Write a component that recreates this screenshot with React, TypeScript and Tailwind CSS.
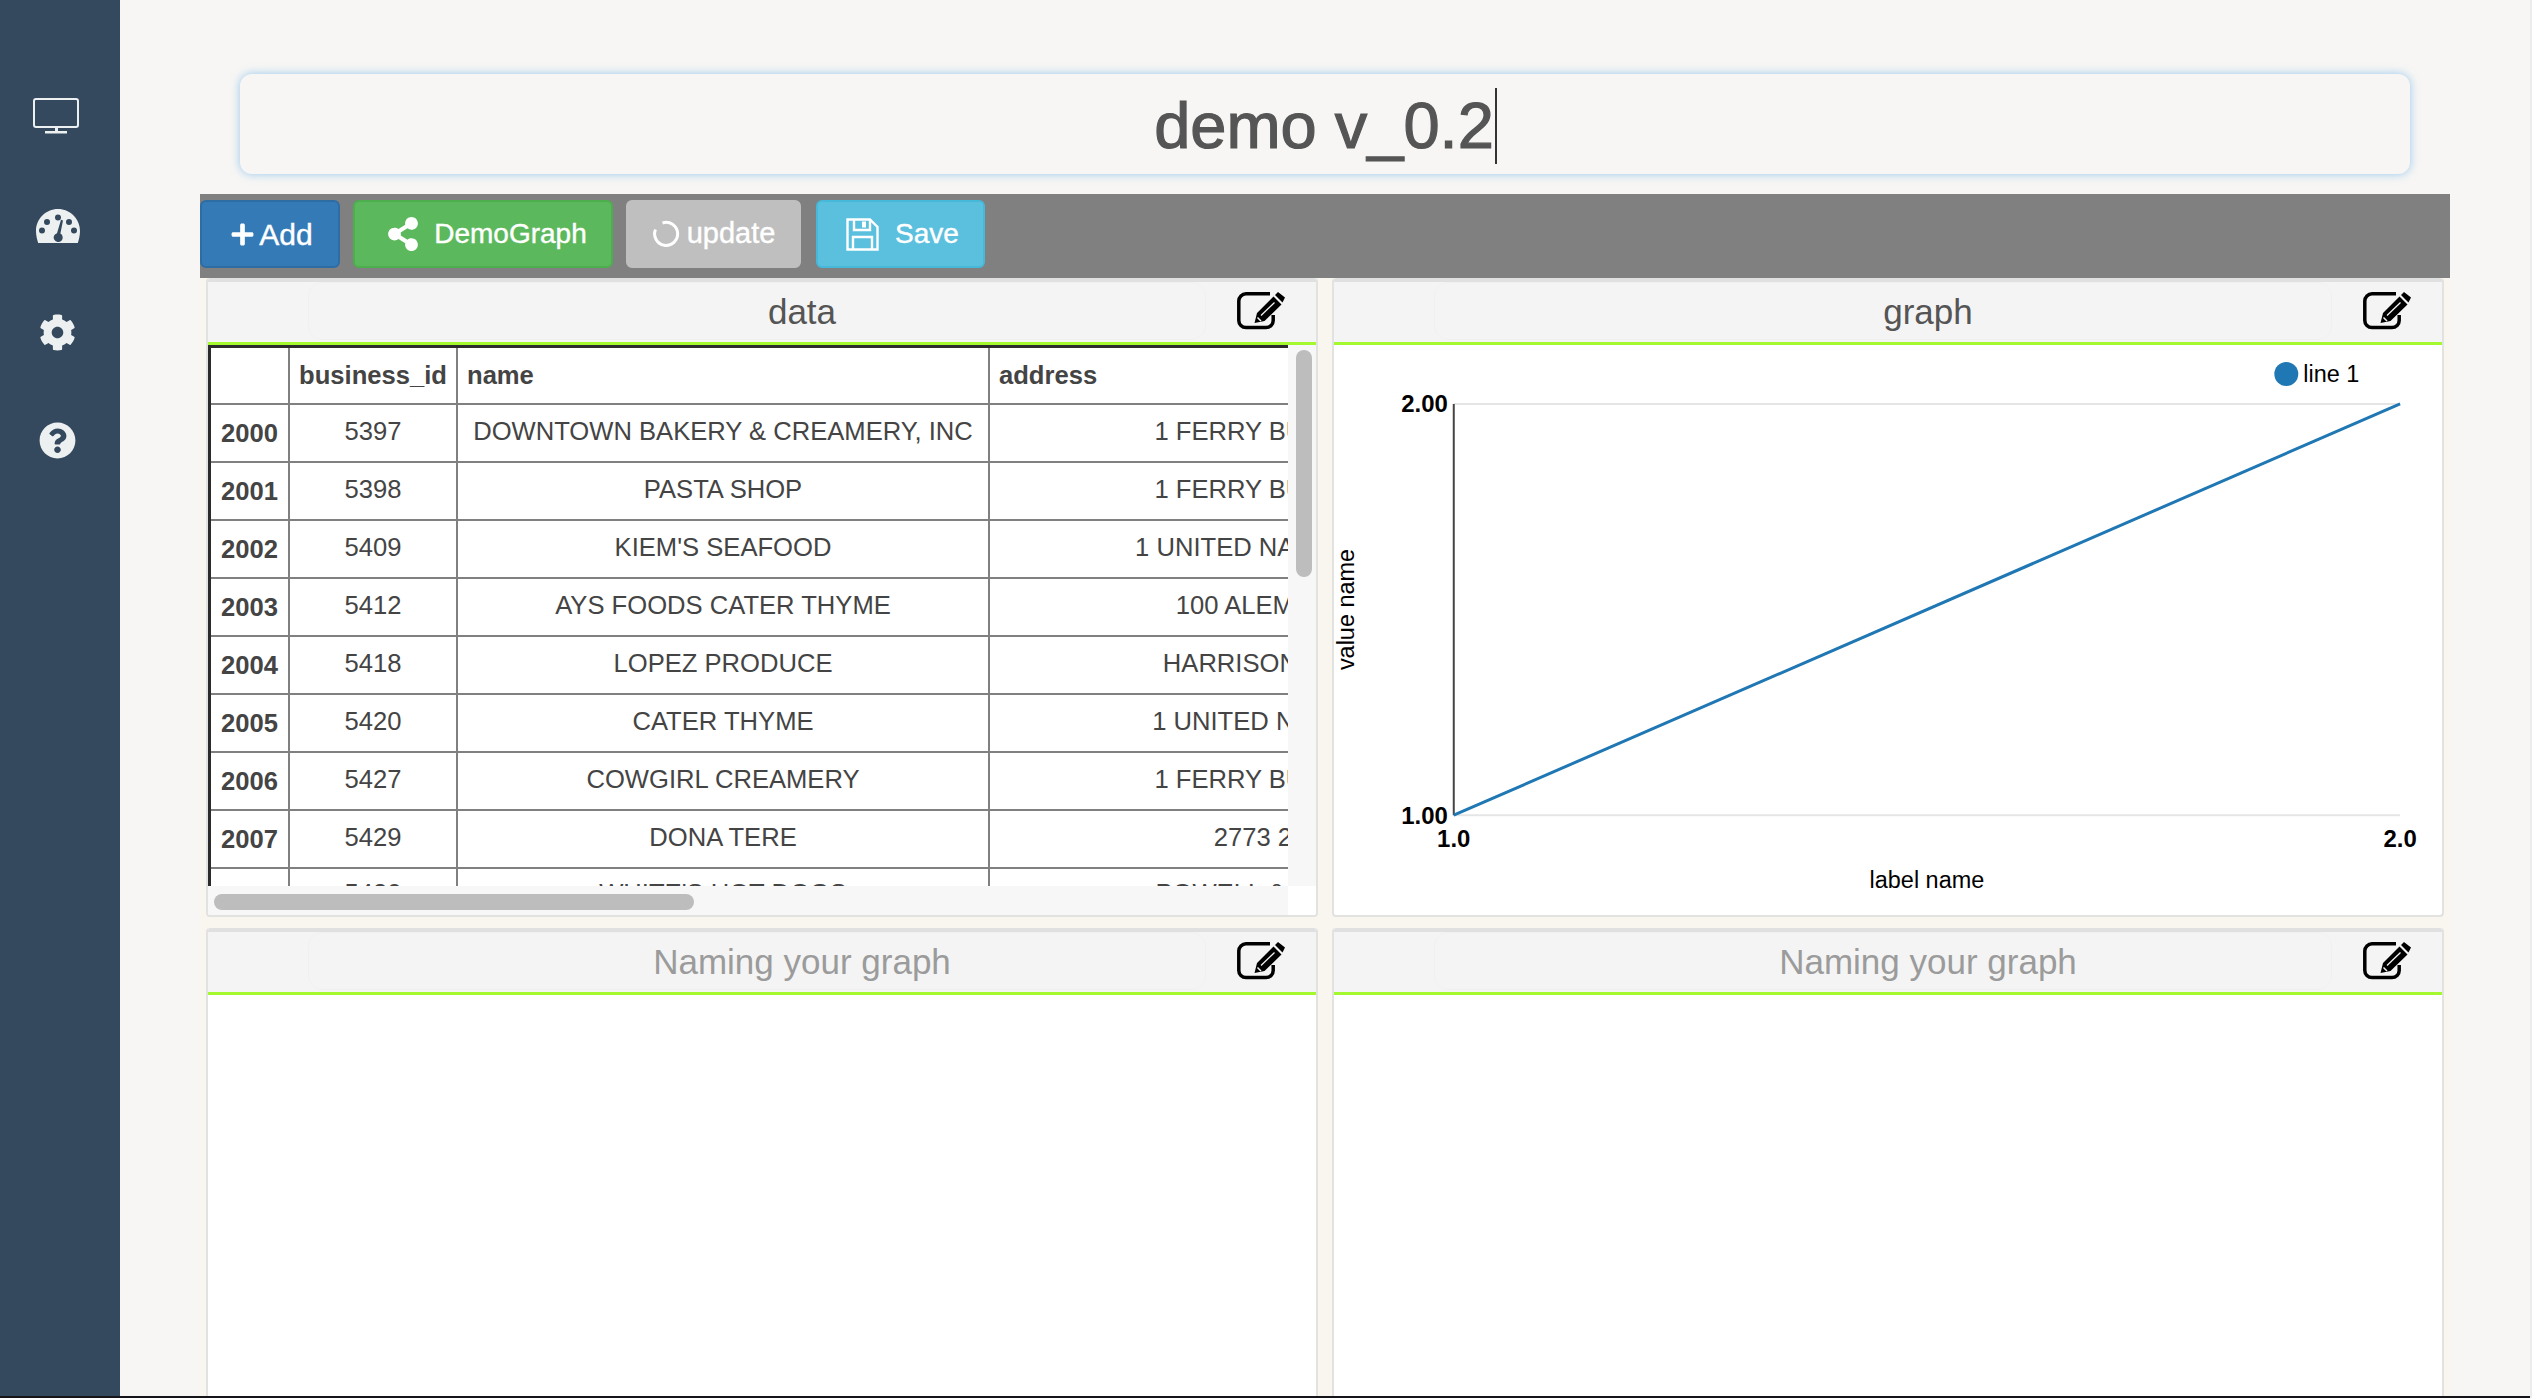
import React from "react";
import { FaCog, FaQuestionCircle, FaShareAlt, FaPlus } from "react-icons/fa";

const rows = [
  ["2000", "5397", "DOWNTOWN BAKERY & CREAMERY, INC", "1 FERRY BUILDING #75"],
  ["2001", "5398", "PASTA SHOP", "1 FERRY BUILDING #75"],
  ["2002", "5409", "KIEM'S SEAFOOD", "1 UNITED NATIONS PLAZA"],
  ["2003", "5412", "AYS FOODS CATER THYME", "100 ALEMANY BLVD"],
  ["2004", "5418", "LOPEZ PRODUCE", "HARRISON ST & 16TH"],
  ["2005", "5420", "CATER THYME", "1 UNITED NATIONS PLZ"],
  ["2006", "5427", "COWGIRL CREAMERY", "1 FERRY BUILDING #19"],
  ["2007", "5429", "DONA TERE", "2773 24TH ST"],
];

function EditIcon() {
  return (
    <svg width="48" height="38" viewBox="0 0 48 38" className="shrink-0">
      <path d="M33 1.800H9a7.200 7.200 0 0 0-7.200 7.200v19.400a7.200 7.200 0 0 0 7.200 7.200h20a7.200 7.200 0 0 0 7.200-7.200v-5.400" fill="none" stroke="#000" strokeWidth="3.500" />
      <path fill="#000" d="M36.500 4.500 44.500 12.500 27.500 29 17.500 31 20 21ZM38 3 41 0 48 5.500 45.500 10.500Z" />
      <path d="M24 23.500 37.500 10.500" stroke="#f4f4f4" strokeWidth="1.300" />
      <path d="M20.500 25.500 24 29" stroke="#f4f4f4" strokeWidth="1.500" />
    </svg>
  );
}

function Panel({ title, placeholder, children, className }: { title: string; placeholder?: boolean; children?: React.ReactNode; className?: string }) {
  return (
    <section className={"bg-white rounded-[4px] border-x-2 border-b-2 border-[#e2e2e0] flex flex-col overflow-hidden " + (className ?? "")}>
      <header className="h-[67px] shrink-0 bg-[#f4f4f4] border-t-4 border-[#e0e0e0] border-b-[3px] border-b-[#a4f92e] flex items-stretch pl-[100px]">
        <div className={"w-[898px] h-[58px] rounded-[14px] border border-[#f0f0f0] pl-[90px] text-center leading-[58px] text-[35px] " + (placeholder ? "text-[#9b9b9b]" : "text-[#555555]")}>
          {title}
        </div>
        <div className="ml-[31px] pt-[10px]"><EditIcon /></div>
      </header>
      {children}
    </section>
  );
}

function DataTable() {
  return (
    <div className="flex flex-col h-[571px]">
      <div className="flex h-[541px]">
        <div className="w-[1080px] overflow-hidden border-t-[3px] border-l-[3px] border-[#2b2b2b]">
          <table className="table-fixed border-collapse w-[1393px] text-[25.6px] text-[#444444]">
            <colgroup>
              <col className="w-[78px]" />
              <col className="w-[168px]" />
              <col className="w-[532px]" />
              <col className="w-[615px]" />
            </colgroup>
            <thead>
              <tr className="h-[56px] border-b-2 border-[#808080] font-bold">
                <th className="border-r-2 border-[#808080]"></th>
                <th className="border-r-2 border-[#808080] text-center whitespace-nowrap">business_id</th>
                <th className="border-r-2 border-[#808080] text-left pl-[9px]">name</th>
                <th className="text-left pl-[9px]">address</th>
              </tr>
            </thead>
            <tbody>
              {rows.map((r) => (
                <tr key={r[0]} className="h-[58px] border-b-2 border-[#808080]">
                  <td className="border-r-2 border-[#808080] font-bold text-center">{r[0]}</td>
                  <td className="border-r-2 border-[#808080] text-center pb-[4px]">{r[1]}</td>
                  <td className="border-r-2 border-[#808080] text-center whitespace-nowrap pb-[4px]">{r[2]}</td>
                  <td className="text-center whitespace-nowrap pb-[4px]">{r[3]}</td>
                </tr>
              ))}
              <tr className="h-[58px] align-top">
                <td className="border-r-2 border-[#808080] font-bold text-center pt-[16px]">2008</td>
                <td className="border-r-2 border-[#808080] text-center pt-[5px]">5430</td>
                <td className="border-r-2 border-[#808080] text-center whitespace-nowrap pt-[5px]">WHITE'S HOT DOGS</td>
                <td className="text-center whitespace-nowrap pt-[5px]">POWELL & MARKET ST</td>
              </tr>
            </tbody>
          </table>
        </div>
        <div className="w-[28px] bg-[#f7f7f7] pl-[8px] pt-[5px]">
          <div className="w-[16px] h-[227px] rounded-full bg-[#bdbdbd]"></div>
        </div>
      </div>
      <div className="flex h-[30px]">
        <div className="w-[1080px] bg-[#f7f7f7] pt-[8px] pl-[6px]">
          <div className="w-[480px] h-[16px] rounded-full bg-[#bdbdbd]"></div>
        </div>
        <div className="w-[28px] bg-white"></div>
      </div>
    </div>
  );
}

function Chart() {
  return (
    <svg viewBox="0 0 1107 571" className="w-[1107px] h-[571px]" style={{ fontFamily: "'Liberation Sans', Arial, sans-serif" }}>
      <line x1="119" y1="59" x2="1067" y2="59" stroke="#e5e5e5" strokeWidth="2" />
      <line x1="119" y1="471" x2="1067" y2="471" stroke="#e5e5e5" strokeWidth="2" />
      <line x1="119" y1="59" x2="119" y2="471" stroke="#444444" strokeWidth="2" />
      <line x1="119" y1="471" x2="1067" y2="59" stroke="#1f77b4" strokeWidth="3" />
      <text x="113" y="67" textAnchor="end" fontSize="24" fontWeight="700" fill="#000">2.00</text>
      <text x="113" y="480" textAnchor="end" fontSize="24" fontWeight="700" fill="#000">1.00</text>
      <text x="119" y="503" textAnchor="middle" fontSize="24" fontWeight="700" fill="#000">1.0</text>
      <text x="1067" y="503" textAnchor="middle" fontSize="24" fontWeight="700" fill="#000">2.0</text>
      <text x="593" y="544" textAnchor="middle" fontSize="23.500" fill="#000">label name</text>
      <text transform="translate(19 265) rotate(-90)" textAnchor="middle" fontSize="23.500" fill="#000">value name</text>
      <circle cx="953" cy="29" r="12" fill="#1f77b4" />
      <text x="970" y="37" fontSize="23.500" fill="#000">line 1</text>
    </svg>
  );
}

export default function App() {
  return (
    <div className="flex flex-col h-[1398px] overflow-hidden bg-[#f7f6f4] border-r-2 border-[#ececec]" style={{ fontFamily: "'Liberation Sans', Arial, sans-serif" }}>
      <div className="flex h-[1396px] overflow-hidden">
        <aside className="w-[120px] shrink-0 bg-[#34495e] text-[#ecf0f1] flex flex-col items-center">
          <svg width="46" height="37" viewBox="0 0 46 37" className="mt-[98px] ml-[-9px]">
            <rect x="1" y="1" width="44" height="28" rx="2" fill="none" stroke="#ecf0f1" strokeWidth="2" />
            <path d="M22 29h3v5h-3zM12 33h22v2.500H12z" fill="#ecf0f1" />
          </svg>
          <svg width="44" height="34" viewBox="0 0 44 34" className="mt-[74px] ml-[-5px]">
            <path fillRule="evenodd" fill="#ecf0f1" d="M22 0C9.800 0 0 9.800 0 22c0 4.200 1 8.500 2.200 12h39.600C43 30.500 44 26.200 44 22 44 9.800 34.200 0 22 0ZM22 5.500a3 3 0 1 1 0 6 3 3 0 0 1 0-6ZM11 10a3 3 0 1 1 0 6 3 3 0 0 1 0-6ZM33 10a3 3 0 1 1 0 6 3 3 0 0 1 0-6ZM6 18.500a3 3 0 1 1 0 6 3 3 0 0 1 0-6ZM38 18.500a3 3 0 1 1 0 6 3 3 0 0 1 0-6ZM25 10.800l2 .6-2.600 13.200a4.500 4.500 0 1 1-3.400-.4Z" />
          </svg>
          <FaCog className="mt-[71px] ml-[-5px]" size={37} />
          <FaQuestionCircle className="mt-[71px] ml-[-5px]" size={37} />
        </aside>

        <main className="flex-1 min-w-0 pl-[80px]">
          <div className="w-[2250px]">
            <div className="mt-[74px] ml-[40px] w-[2170px] h-[100px] pt-[4px] rounded-[12px] bg-[#f7f6f4] shadow-[0_0_10px_rgba(102,175,233,0.65)] flex items-center justify-center text-[65px] text-[#555555] [-webkit-text-stroke:1.2px_#555555]">
              <span className="pl-[1px]">demo v_0.2</span>
              <span className="w-[2px] h-[76px] bg-[#333333] ml-[1px]"></span>
            </div>

            <div className="mt-[20px] h-[84px] bg-[#808080] flex items-start gap-[13px] pt-[6px] text-white text-[28px] [-webkit-text-stroke:0.4px_#ffffff]">
              <button className="h-[68px] w-[140px] pl-[3px] rounded-[6px] bg-[#337ab7] border-2 border-[#2e6da4] flex items-center justify-center gap-[4px] text-[30px]">
                <FaPlus size={25} />Add
              </button>
              <button className="h-[68px] w-[260px] pl-[7px] rounded-[6px] bg-[#5cb85c] border-2 border-[#4cae4c] flex items-center justify-center gap-[14px]">
                <FaShareAlt size={34} />DemoGraph
              </button>
              <button className="h-[68px] w-[175px] rounded-[6px] bg-[#bfbfbf] border-2 border-[#bfbfbf] flex items-center justify-center gap-[7px] text-[29px]">
                <svg width="28" height="28" viewBox="0 0 28 28"><path d="M10.500 3A11.500 11.500 0 1 1 3.500 9.500" fill="none" stroke="#fff" strokeWidth="3" /></svg>
                update
              </button>
              <button className="h-[68px] w-[169px] ml-[2px] pl-[4px] rounded-[6px] bg-[#5bc0de] border-2 border-[#46b8da] flex items-center justify-center gap-[16px]">
                <svg width="33" height="33" viewBox="0 0 33 33" fill="none" stroke="#fff" strokeWidth="2.400" className="shrink-0">
                  <path d="M1.500 1.500H24L31.500 9V31.500H1.500Z" />
                  <path d="M8 1.500V12H24V1.500" />
                  <path d="M7 31.500V19H26V31.500" />
                  <path d="M18 3.500V9.500" strokeWidth="4" />
                </svg>
                Save
              </button>
            </div>

            <div className="bg-[#f8f6ef] px-[6px] grid grid-cols-[1112px_1112px] gap-x-[14px] gap-y-[11px]">
              <Panel title="data" className="h-[639px]"><DataTable /></Panel>
              <Panel title="graph" className="h-[639px]"><Chart /></Panel>
              <Panel title="Naming your graph" placeholder className="h-[480px]" />
              <Panel title="Naming your graph" placeholder className="h-[480px]" />
            </div>
          </div>
        </main>
      </div>
      <div className="h-[2px] bg-[#15151a]"></div>
    </div>
  );
}
